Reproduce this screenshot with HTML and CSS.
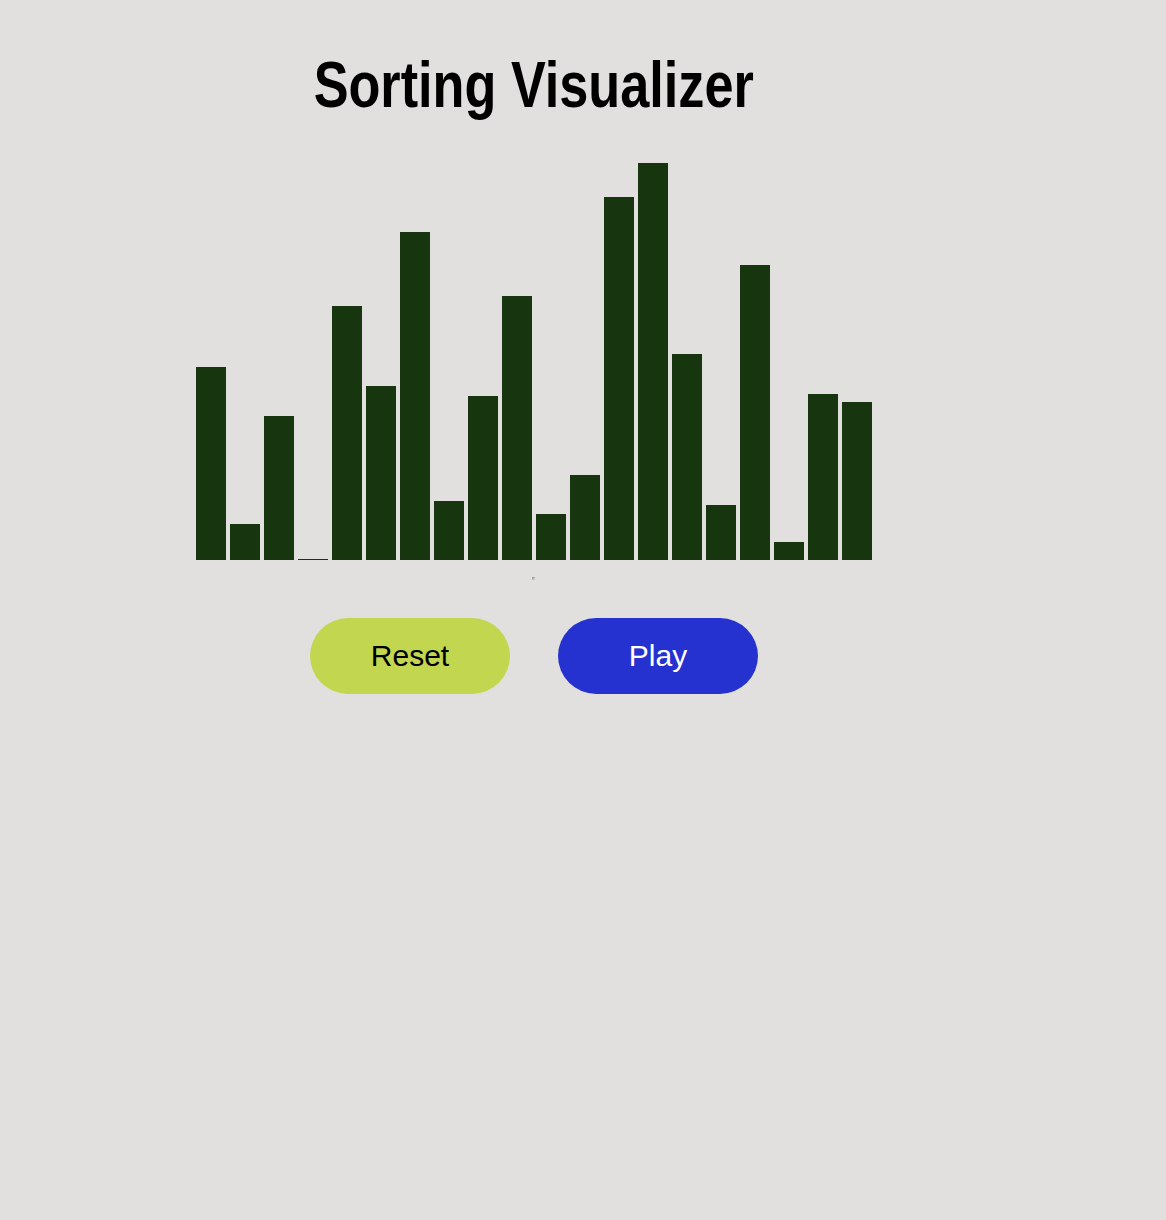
FILE: index.html
```html
<!DOCTYPE html>
<html lang="en">
<head>
<meta charset="utf-8">
<title>Sorting Visualizer</title>
<link rel="stylesheet" href="styles.css">
</head>
<body>
<div class="app">
  <h1 class="title"><span class="title-text">Sorting Visualizer</span></h1>
  <div class="chart">
    <div class="bar" style="height:193px"></div>
    <div class="bar" style="height:36px"></div>
    <div class="bar" style="height:144px"></div>
    <div class="bar" style="height:1px"></div>
    <div class="bar" style="height:254px"></div>
    <div class="bar" style="height:174px"></div>
    <div class="bar" style="height:328px"></div>
    <div class="bar" style="height:59px"></div>
    <div class="bar" style="height:164px"></div>
    <div class="bar" style="height:264px"></div>
    <div class="bar" style="height:46px"></div>
    <div class="bar" style="height:85px"></div>
    <div class="bar" style="height:363px"></div>
    <div class="bar" style="height:397px"></div>
    <div class="bar" style="height:206px"></div>
    <div class="bar" style="height:55px"></div>
    <div class="bar" style="height:295px"></div>
    <div class="bar" style="height:18px"></div>
    <div class="bar" style="height:166px"></div>
    <div class="bar" style="height:158px"></div>
  </div>
  <div class="mark-row"><span class="mark"></span></div>
  <div class="controls">
    <button class="btn btn-reset">Reset</button>
    <button class="btn btn-play">Play</button>
  </div>
</div>
</body>
</html>
```

FILE: styles.css
```css
html, body {
  margin: 0;
  padding: 0;
  background: #e1e0df;
}

body {
  font-family: "Liberation Sans", Arial, sans-serif;
  min-height: 1220px;
}

.app {
  width: 1068px;
  display: flex;
  flex-direction: column;
  align-items: center;
}

.title {
  margin: 53px 0 0 0;
  height: 64px;
  font-size: 64px;
  line-height: 64px;
  font-weight: 700;
  color: #000;
  text-align: center;
}

.title-text {
  display: inline-block;
  transform: scaleX(0.816);
  transform-origin: center;
  white-space: nowrap;
}

.chart {
  margin-top: 43px;
  height: 400px;
  display: flex;
  align-items: flex-end;
  gap: 4px;
}

.bar {
  width: 30px;
  background: #173610;
}

.mark-row {
  margin-top: 17px;
  height: 3px;
  display: flex;
  justify-content: center;
}

.mark {
  display: block;
  width: 3px;
  height: 3px;
  margin-left: -2px;
  background: linear-gradient(135deg, #8a8a8a 0%, #b5b5b5 50%, #e1e0df 100%);
}

.controls {
  margin-top: 38px;
  display: flex;
  gap: 48px;
}

.btn {
  width: 200px;
  height: 76px;
  border: none;
  border-radius: 38px;
  font-family: "Liberation Sans", Arial, sans-serif;
  font-size: 30px;
  padding: 0;
  cursor: pointer;
}

.btn-reset {
  background: #c3d64f;
  color: #000;
}

.btn-play {
  background: #2632d0;
  color: #fff;
}
```
